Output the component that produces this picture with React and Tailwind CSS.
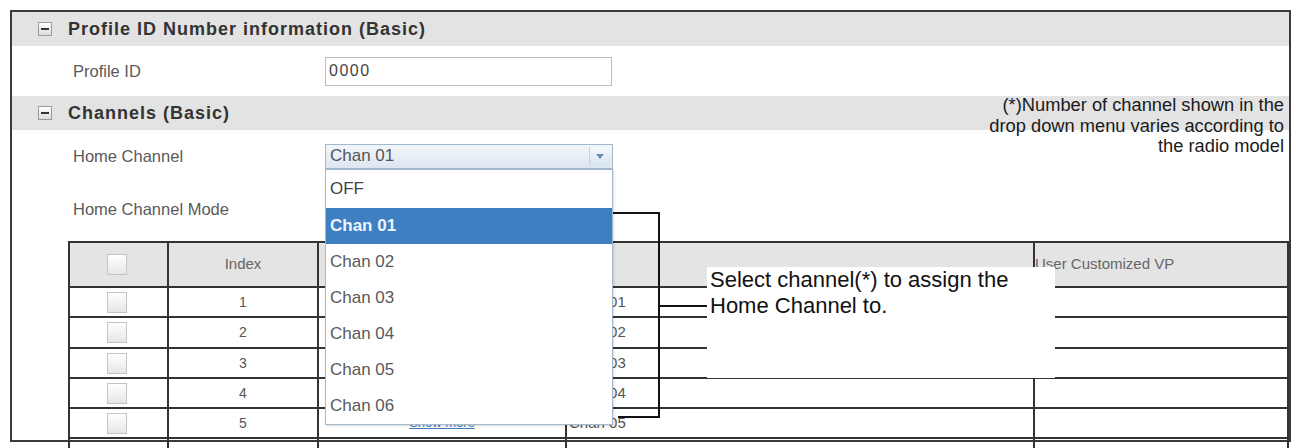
export default function App() {
  const rows = [1, 2, 3, 4, 5];
  const items = ["OFF", "Chan 01", "Chan 02", "Chan 03", "Chan 04", "Chan 05", "Chan 06"];
  return (
    <div className="relative h-[448px] w-[1296px] overflow-hidden bg-white font-['Liberation_Sans',Arial,sans-serif]">
      <div className="ml-[10px] mt-[10px] h-[432px] w-[1281px] border-2 border-[#3a3a3a]">
        <SectionHeader title="Profile ID Number information (Basic)" />
        <div className="flex h-[50px] items-center">
          <div className="w-[313px] pl-[61px] text-[16.5px] text-[#5a5a5a]">Profile ID</div>
          <div className="flex h-[29px] w-[287px] items-center border border-[#bdbdbd] pl-[3px] text-[16px] tracking-[1.5px] text-[#444]">
            0000
          </div>
        </div>
        <SectionHeader title="Channels (Basic)" />
        <div className="flex h-[40px] items-center pt-[12px]">
          <div className="w-[313px] pl-[61px] text-[16.5px] text-[#5a5a5a]">Home Channel</div>
          <div className="flex h-[25px] w-[288px] items-center border border-[#a3b8cd] bg-linear-to-b from-[#f1f6fb] to-[#dde7f1]">
            <div className="flex-1 pl-[4px] text-[17px] text-[#555]">Chan 01</div>
            <div className="mr-[2px] flex h-[19px] w-[21px] items-center justify-center border-l border-[#c5d3e1] bg-linear-to-b from-[#f4f8fc] to-[#d9e4ef]">
              <svg width="8" height="5" viewBox="0 0 8 5">
                <path d="M0 0 L8 0 L4 5 Z" fill="#6a8db3" />
              </svg>
            </div>
          </div>
        </div>
        <div className="flex h-[71px] items-center pt-[8px]">
          <div className="w-[313px] pl-[61px] text-[16.5px] text-[#5a5a5a]">Home Channel Mode</div>
        </div>
        <div className="ml-[56px] w-[1221px] border-x-2 border-[#333]">
          <div className="flex h-[45px] border-t-2 border-[#333] bg-[#e4e4e4]">
            <div className="flex w-[99px] items-center border-r-2 border-[#333] pl-[37px]">
              <Check />
            </div>
            <div className="flex w-[150px] items-center justify-center border-r-2 border-[#333] text-[15px] text-[#666]">
              Index
            </div>
            <div className="w-[248px] border-r-2 border-[#333]" />
            <div className="w-[468px] border-r-2 border-[#333]" />
            <div className="flex w-[252px] items-center text-[15px] text-[#666]">User Customized VP</div>
          </div>
          {rows.map((n) => (
            <div key={n} className={`flex border-t-2 border-[#333] ${n === 2 ? "h-[31px]" : "h-[30px]"}`}>
              <div className="flex w-[99px] items-center border-r-2 border-[#333] pl-[37px]">
                <Check />
              </div>
              <div className="flex w-[150px] items-center justify-center border-r-2 border-[#333] text-[14px] text-[#555]">
                {n}
              </div>
              <div className="flex w-[248px] items-center justify-center border-r-2 border-[#333]">
                <span className="text-[13px] text-[#3d78b8] underline">Show more</span>
              </div>
              <div className="flex w-[468px] items-center border-r-2 border-[#333] pl-[2px] text-[15px] text-[#555]">
                Chan 0{n}
              </div>
              <div className="w-[252px]" />
            </div>
          ))}
          <div className="flex h-[20px] border-t-2 border-[#333]">
            <div className="w-[99px] border-r-2 border-[#333]" />
            <div className="w-[150px] border-r-2 border-[#333]" />
            <div className="w-[248px] border-r-2 border-[#333]" />
            <div className="w-[468px] border-r-2 border-[#333]" />
            <div className="w-[252px]" />
          </div>
        </div>
      </div>

      {/* dropdown list */}
      <div className="absolute left-[325px] top-[169px] flex w-[288px] flex-col border border-[#a7b9cc] bg-white shadow-[1px_1px_2px_rgba(0,0,0,0.15)]">
        {items.map((it, i) => (
          <div
            key={it}
            className={`flex items-center pl-[4px] text-[17px] ${i === 0 ? "h-[38px] text-[#444]" : "h-[36px]"} ${
              i === 1 ? "bg-[#3d7fc0] font-bold text-[#eef5ff]" : i > 1 ? "text-[#5a5a5a]" : ""
            }`}
          >
            {it}
          </div>
        ))}
      </div>

      {/* top-right annotation */}
      <div className="absolute right-[12px] top-[95px] text-right text-[18.3px] leading-[20.5px] text-[#1a1a1a]">
        <div>(*)Number of channel shown in the</div>
        <div>drop down menu varies according to</div>
        <div>the radio model</div>
      </div>

      {/* bracket lines */}
      <div className="absolute left-[613px] top-[212px] h-[2px] w-[47px] bg-[#111]" />
      <div className="absolute left-[658px] top-[212px] h-[206px] w-[2px] bg-[#111]" />
      <div className="absolute left-[618px] top-[416px] h-[2px] w-[42px] bg-[#111]" />
      <div className="absolute left-[660px] top-[305px] h-[2px] w-[48px] bg-[#111]" />

      {/* callout */}
      <div className="absolute left-[707px] top-[267px] h-[111px] w-[348px] bg-white pl-[3px] text-[22px] leading-[26px] text-[#111]">
        <div>Select channel(*) to assign the</div>
        <div>Home Channel to.</div>
      </div>
    </div>
  );
}

function SectionHeader({ title }) {
  return (
    <div className="flex h-[34px] items-center bg-[#e3e3e3] pl-[26px]">
      <div className="flex h-[14px] w-[14px] items-center justify-center border border-[#9a9a9a] bg-linear-to-b from-white to-[#dcdcdc]">
        <div className="h-[2px] w-[8px] bg-[#333]" />
      </div>
      <div className="ml-[16px] text-[18px] font-bold tracking-[1px] text-[#333]">{title}</div>
    </div>
  );
}

function Check() {
  return <div className="h-[21px] w-[20px] border border-[#c4c4c4] bg-linear-to-b from-white to-[#e6e6e6]" />;
}
